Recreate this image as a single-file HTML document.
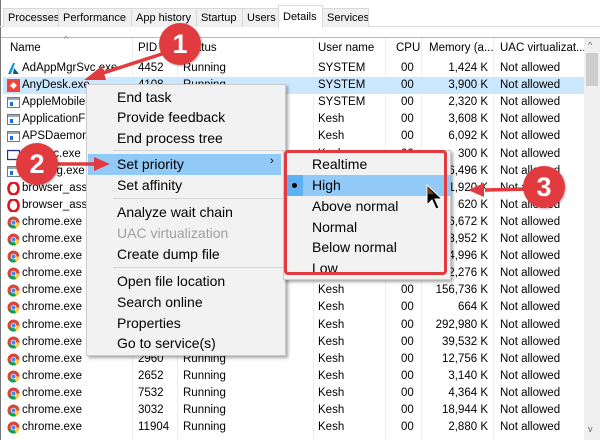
<!DOCTYPE html>
<html><head><style>
*{margin:0;padding:0;box-sizing:border-box}
body{width:600px;height:440px;overflow:hidden;background:#fff;font-family:"Liberation Sans",sans-serif;font-size:11.5px;color:#000;position:relative}
.a{position:absolute;white-space:nowrap}
.tab{position:absolute;top:8px;height:19px;background:#f0f0f0;border:1px solid #d9d9d9;border-bottom:none;font-size:11px;padding:3px 0 0 4px;overflow:hidden;white-space:nowrap}
.row{position:absolute;left:3px;width:580px;height:17px}
.row span{position:absolute;top:2px}
.row span.n{width:110px;overflow:hidden}
.ico{position:absolute;left:4px;top:2px;width:13px;height:13px}
.menu{position:absolute;background:#f2f2f2;border:1px solid #ccc;box-shadow:2px 2px 3px rgba(0,0,0,.35)}
.mi{position:absolute;font-size:14px}
.sep{position:absolute;height:1px;background:#d7d7d7}
.badge{position:absolute;border-radius:50%;background:#e23b3f;color:#fff;font-weight:bold;font-size:27px;text-align:center;box-shadow:1px 1px 2px rgba(0,0,0,.3)}
</style></head><body>
<div class="a" style="left:0;top:0;width:1px;height:440px;background:#777"></div>
<div class="a" style="left:0;top:26px;width:600px;height:1px;background:#d9d9d9"></div>
<div class="tab" style="left:3px;width:56px">Processes</div>
<div class="tab" style="left:58px;width:74px">Performance</div>
<div class="tab" style="left:131px;width:66px">App history</div>
<div class="tab" style="left:196px;width:47px">Startup</div>
<div class="tab" style="left:242px;width:37px">Users</div>
<div class="tab" style="left:278px;width:45px;top:5px;height:23px;background:#fff;padding-top:5px">Details</div>
<div class="tab" style="left:322px;width:47px">Services</div>
<div class="a" style="left:1px;top:37px;width:599px;height:1px;background:#bbb"></div>
<div class="a" style="left:10px;top:42px">Name</div>
<div class="a" style="left:64px;top:34px;font-size:9px;color:#888">^</div>
<div class="a" style="left:138px;top:42px">PID</div>
<div class="a" style="left:184px;top:42px">Status</div>
<div class="a" style="left:318px;top:42px">User name</div>
<div class="a" style="left:396px;top:42px">CPU</div>
<div class="a" style="left:429px;top:42px">Memory (a...</div>
<div class="a" style="left:500px;top:42px">UAC virtualizat...</div>
<div class="a" style="left:132px;top:38px;width:1px;height:402px;background:#eee"></div>
<div class="a" style="left:177px;top:38px;width:1px;height:402px;background:#eee"></div>
<div class="a" style="left:313px;top:38px;width:1px;height:402px;background:#eee"></div>
<div class="a" style="left:385px;top:38px;width:1px;height:402px;background:#eee"></div>
<div class="a" style="left:421px;top:38px;width:1px;height:402px;background:#eee"></div>
<div class="a" style="left:493px;top:38px;width:1px;height:402px;background:#eee"></div>
<div class="a" style="left:584px;top:38px;width:16px;height:402px;background:#f0f0f0"></div>
<div class="a" style="left:586px;top:53px;width:12px;height:33px;background:#cdcdcd"></div>
<div class="a" style="left:588px;top:40px;font-size:9px;color:#606060">^</div>
<div class="a" style="left:588px;top:424px;font-size:9px;color:#606060">v</div>
<div class="a" style="left:3px;top:77px;width:581px;height:17px;background:#cce8ff"></div>
<div id="rows"></div>
<script>
var R=[["AdApp","AdAppMgrSvc.exe","4452","Running","SYSTEM","1,424 K"],
["any","AnyDesk.exe","4108","Running","SYSTEM","3,900 K"],
["win","AppleMobileDeviceService.exe","","","SYSTEM","2,320 K"],
["win","ApplicationFrameHost.exe","","","Kesh","3,608 K"],
["win","APSDaemon.exe","","","Kesh","6,092 K"],
["box","armsvc.exe","","","","300 K"],
["win","audiodg.exe","","","","6,496 K"],
["op","browser_assistant.exe","","","","1,920 K"],
["op","browser_assistant.exe","","","","620 K"],
["ch","chrome.exe","","","","6,672 K"],
["ch","chrome.exe","","","","3,952 K"],
["ch","chrome.exe","","","","4,996 K"],
["ch","chrome.exe","","","","2,276 K"],
["ch","chrome.exe","","","Kesh","156,736 K"],
["ch","chrome.exe","","","Kesh","664 K"],
["ch","chrome.exe","","","Kesh","292,980 K"],
["ch","chrome.exe","","","Kesh","39,532 K"],
["ch","chrome.exe","2960","Running","Kesh","12,756 K"],
["ch","chrome.exe","2652","Running","Kesh","3,140 K"],
["ch","chrome.exe","7532","Running","Kesh","4,364 K"],
["ch","chrome.exe","3032","Running","Kesh","18,944 K"],
["ch","chrome.exe","11904","Running","Kesh","2,880 K"]];
var ic={AdApp:'<svg class="ico" viewBox="0 0 13 13"><path d="M1 12L6 1h2L4 12z" fill="#0696d7"/><path d="M7 6l5 6H6z" fill="#075b7a"/></svg>',
any:'<svg class="ico" viewBox="0 0 13 13"><rect width="13" height="13" fill="#ef443b"/><path d="M6.5 3l3.5 3.5-3.5 3.5L3 6.5z" fill="#fff"/></svg>',
win:'<svg class="ico" viewBox="0 0 13 13"><rect x=".5" y="1.5" width="12" height="10" fill="#fff" stroke="#6a7a8a"/><rect x="1" y="2" width="11" height="2" fill="#9ab"/><rect x="3" y="6" width="3" height="4" fill="#1e6fd0"/></svg>',
box:'<svg class="ico" viewBox="0 0 13 13"><rect x=".5" y="2.5" width="12" height="9" fill="#fff" stroke="#1f2f9f" stroke-width="1.3"/></svg>',
op:'<svg class="ico" viewBox="0 0 13 13"><ellipse cx="6.5" cy="6.5" rx="5" ry="6" fill="none" stroke="#e0141e" stroke-width="2.6"/></svg>',
ch:'<svg class="ico" viewBox="0 0 13 13"><circle cx="6.5" cy="6.5" r="6" fill="#db4437"/><path d="M6.5 6.5L1.3 9.5A6 6 0 0 0 9 12z" fill="#0f9d58"/><path d="M6.5 6.5L9 12A6 6 0 0 0 12.5 6.5z" fill="#ffcd40"/><circle cx="6.5" cy="6.5" r="2.8" fill="#fff"/><circle cx="6.5" cy="6.5" r="2.1" fill="#4285f4"/></svg>'};
var h='';
R.forEach(function(r,i){var y=60+i*17.1;
h+='<div class="row" style="top:'+y+'px">'+ic[r[0]]+'<span class="n" style="left:19px">'+r[1]+'</span><span style="left:135px">'+r[2]+'</span><span style="left:180px">'+r[3]+'</span><span style="left:315px">'+(r[4]||'Kesh')+'</span><span style="left:398px">00</span><span style="right:95px">'+r[5]+'</span><span style="left:497px">Not allowed</span></div>';});
document.getElementById('rows').innerHTML=h;
</script>
<div class="menu" style="left:86px;top:84px;width:200px;height:272px"></div>
<div class="a" style="left:88px;top:154px;width:193px;height:21px;background:#91c9f7"></div>
<div class="mi" style="left:117px;top:89px">End task</div>
<div class="mi" style="left:117px;top:109px">Provide feedback</div>
<div class="mi" style="left:117px;top:130px">End process tree</div>
<div class="sep" style="left:113px;top:150px;width:170px"></div>
<div class="mi" style="left:117px;top:156px">Set priority</div>
<div class="mi" style="left:270px;top:155px;font-size:11px">›</div>
<div class="mi" style="left:117px;top:177px">Set affinity</div>
<div class="sep" style="left:113px;top:198px;width:170px"></div>
<div class="mi" style="left:117px;top:204px">Analyze wait chain</div>
<div class="mi" style="left:117px;top:225px;color:#a0a0a0">UAC virtualization</div>
<div class="mi" style="left:117px;top:246px">Create dump file</div>
<div class="sep" style="left:113px;top:267px;width:170px"></div>
<div class="mi" style="left:117px;top:273px">Open file location</div>
<div class="mi" style="left:117px;top:294px">Search online</div>
<div class="mi" style="left:117px;top:315px">Properties</div>
<div class="mi" style="left:117px;top:335px">Go to service(s)</div>
<div class="menu" style="left:283px;top:150px;width:168px;height:130px"></div>
<div class="a" style="left:287px;top:175px;width:164px;height:21px;background:#91c9f7"></div>
<div class="a" style="left:287px;top:175px;width:16px;height:21px;background:#5fb0f3"></div>
<div class="a" style="left:292px;top:183px;width:5px;height:5px;border-radius:50%;background:#000"></div>
<div class="mi" style="left:312px;top:156px">Realtime</div>
<div class="mi" style="left:312px;top:177px">High</div>
<div class="mi" style="left:312px;top:198px">Above normal</div>
<div class="mi" style="left:312px;top:219px">Normal</div>
<div class="mi" style="left:312px;top:239px">Below normal</div>
<div class="mi" style="left:312px;top:260px">Low</div>
<div class="a" style="left:284px;top:150px;width:163px;height:125px;border:3px solid #e23b3f;border-radius:4px"></div>
<svg class="a" style="left:426px;top:184px" width="18" height="26" viewBox="0 0 18 26"><path d="M1 1V21L6 16L10 25L13 24L9 15H16Z" fill="#000" stroke="#fff" stroke-width="1"/><path d="M2 3V10L8 10Z" fill="#7a3a10"/></svg>
<svg class="a" style="left:0;top:0" width="600" height="440">
<g stroke="#e23b3f" stroke-width="3.5" fill="#e23b3f">
<line x1="168" y1="52" x2="100" y2="74"/>
<polygon points="84,80 102,66 106,80" stroke="none"/>
<line x1="55" y1="164" x2="96" y2="164"/>
<polygon points="110,164 94,157 94,171" stroke="none"/>
<line x1="528" y1="189" x2="485" y2="190"/>
<polygon points="468,190 484,183 484,197" stroke="none"/>
</g></svg>
<div class="badge" style="left:159px;top:23px;width:42px;height:42px;line-height:42px">1</div>
<div class="badge" style="left:16px;top:143px;width:42px;height:42px;line-height:42px">2</div>
<div class="badge" style="left:523px;top:166px;width:42px;height:42px;line-height:42px">3</div>
</body></html>
